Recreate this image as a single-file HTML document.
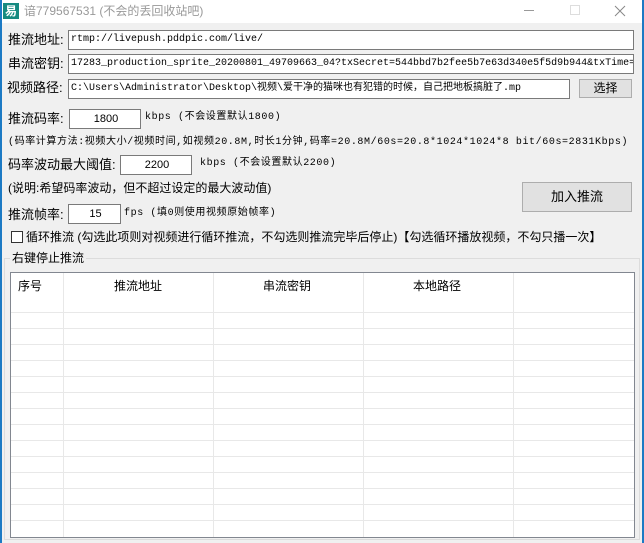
<!DOCTYPE html>
<html><head><meta charset="utf-8"><style>
*{margin:0;padding:0;box-sizing:border-box}
body{width:644px;height:543px;overflow:hidden;background:#f0f0f0;position:relative;font-family:"Liberation Sans","Noto Sans CJK SC",sans-serif;font-size:12px;color:#000}
.a{position:absolute;white-space:nowrap;line-height:14px}
.m{font-family:"Liberation Mono","Noto Sans CJK SC",monospace;letter-spacing:0.6px}
.in{position:absolute;background:#fff;border:1px solid #7a7a7a;font-family:"Liberation Mono","Noto Sans CJK SC",monospace;font-size:10px;line-height:18px;padding-left:2px;white-space:nowrap;overflow:hidden}
.c{text-align:center;font-family:"Liberation Sans","Noto Sans CJK SC",sans-serif;font-size:11px}
.btn{position:absolute;background:#e1e1e1;border:1px solid #adadad;text-align:center;font-size:12px}
</style></head><body>
<div style="position:absolute;left:0;top:0;width:644px;height:23px;background:#fff"></div>
<div style="position:absolute;left:0;top:0;width:2px;height:543px;background:#1c7ac4"></div>
<div style="position:absolute;right:0;top:0;width:2px;height:543px;background:#1c7ac4"></div>
<div style="position:absolute;left:3px;top:3px;width:16px;height:16px;background:#168a80;color:#fff;font-size:12px;line-height:16px;text-align:center;font-weight:bold">易</div>
<div class="a" style="left:24px;top:4px;color:#999;font-size:12px">谙779567531 (不会的丢回收站吧)</div>
<div style="position:absolute;left:524px;top:10px;width:10px;height:1px;background:#999"></div>
<div style="position:absolute;left:570px;top:5px;width:10px;height:10px;border:1px solid #ddd"></div>
<svg style="position:absolute;left:614px;top:5px" width="12" height="12"><path d="M1 1L11 11M11 1L1 11" stroke="#888" stroke-width="1"/></svg>

<div class="a" style="left:8px;top:33px;font-size:13px">推流地址:</div>
<div class="in" style="left:68px;top:30px;width:566px;height:20px">rtmp://livepush.pddpic.com/live/</div>
<div class="a" style="left:8px;top:57px;font-size:13px">串流密钥:</div>
<div class="in" style="left:68px;top:54px;width:566px;height:20px">17283_production_sprite_20200801_49709663_04?txSecret=544bbd7b2fee5b7e63d340e5f5d9b944&amp;txTime=</div>
<div class="a" style="left:7px;top:81px;font-size:13px">视频路径:</div>
<div class="in" style="left:68px;top:79px;width:502px;height:20px">C:\Users\Administrator\Desktop\视频\爱干净的猫咪也有犯错的时候，自己把地板搞脏了.mp</div>
<div class="btn" style="left:579px;top:79px;width:53px;height:19px;line-height:17px">选择</div>

<div class="a" style="left:8px;top:112px;font-size:13px">推流码率:</div>
<div class="in c" style="left:69px;top:109px;width:72px;height:20px">1800</div>
<div class="a m" style="left:145px;top:111px;font-size:10px">kbps (不会设置默认1800)</div>
<div class="a m" style="left:8px;top:136px;font-size:10px">(码率计算方法:视频大小/视频时间,如视频20.8M,时长1分钟,码率=20.8M/60s=20.8*1024*1024*8 bit/60s=2831Kbps)</div>
<div class="a" style="left:8px;top:158px;font-size:13px">码率波动最大阈值:</div>
<div class="in c" style="left:120px;top:155px;width:72px;height:20px">2200</div>
<div class="a m" style="left:200px;top:157px;font-size:10px">kbps (不会设置默认2200)</div>
<div class="a" style="left:8px;top:181px;font-size:12px">(说明:希望码率波动，但不超过设定的最大波动值)</div>
<div class="btn" style="left:522px;top:182px;width:110px;height:30px;line-height:28px;font-size:13px">加入推流</div>
<div class="a" style="left:8px;top:208px;font-size:13px">推流帧率:</div>
<div class="in c" style="left:68px;top:204px;width:53px;height:20px">15</div>
<div class="a m" style="left:124px;top:207px;font-size:10px">fps (填0则使用视频原始帧率)</div>
<div style="position:absolute;left:11px;top:231px;width:12px;height:12px;border:1px solid #333;background:#fff"></div>
<div class="a" style="left:26px;top:230px;font-size:12px">循环推流 (勾选此项则对视频进行循环推流，不勾选则推流完毕后停止)【勾选循环播放视频，不勾只播一次】</div>

<div style="position:absolute;left:4px;top:258px;width:636px;height:282px;border:1px solid #dcdcdc"></div>
<div class="a" style="left:10px;top:251px;background:#f0f0f0;padding:0 2px;font-size:12px">右键停止推流</div>
<div style="position:absolute;left:10px;top:272px;width:625px;height:266px;background:#fff;border:1px solid #828790;overflow:hidden">
<svg width="625" height="266" style="position:absolute;left:0;top:0">
<g stroke="#e8e8e8" stroke-width="1">
<line x1="52.5" y1="0" x2="52.5" y2="264"/><line x1="202.5" y1="0" x2="202.5" y2="264"/><line x1="352.5" y1="0" x2="352.5" y2="264"/><line x1="502.5" y1="0" x2="502.5" y2="264"/>
<line x1="0" y1="39.5" x2="625" y2="39.5"/><line x1="0" y1="55.5" x2="625" y2="55.5"/><line x1="0" y1="71.5" x2="625" y2="71.5"/><line x1="0" y1="87.5" x2="625" y2="87.5"/><line x1="0" y1="103.5" x2="625" y2="103.5"/><line x1="0" y1="119.5" x2="625" y2="119.5"/><line x1="0" y1="135.5" x2="625" y2="135.5"/><line x1="0" y1="151.5" x2="625" y2="151.5"/><line x1="0" y1="167.5" x2="625" y2="167.5"/><line x1="0" y1="183.5" x2="625" y2="183.5"/><line x1="0" y1="199.5" x2="625" y2="199.5"/><line x1="0" y1="215.5" x2="625" y2="215.5"/><line x1="0" y1="231.5" x2="625" y2="231.5"/><line x1="0" y1="247.5" x2="625" y2="247.5"/>
</g></svg>
<div class="a" style="left:7px;top:6px">序号</div>
<div class="a" style="left:103px;top:6px">推流地址</div>
<div class="a" style="left:252px;top:6px">串流密钥</div>
<div class="a" style="left:402px;top:6px">本地路径</div>
</div>
</body></html>
